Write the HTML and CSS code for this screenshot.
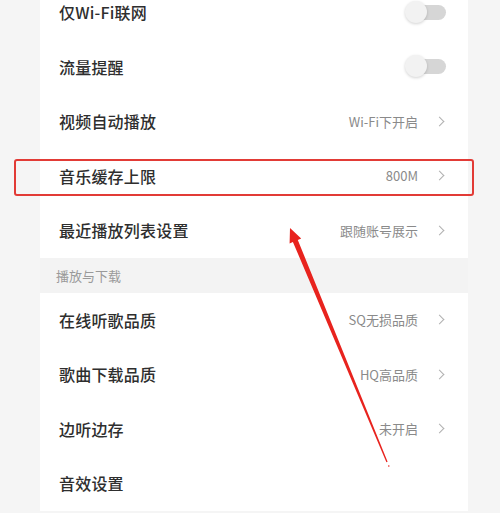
FILE: index.html
```html
<!DOCTYPE html>
<html lang="zh-CN">
<head>
<meta charset="utf-8">
<title>设置</title>
<link rel="stylesheet" href="styles.css">
</head>
<body>
<div class="page">
  <div class="card first">
    <div class="row"><span class="label">仅Wi-Fi联网</span><span class="switch"><span class="knob"></span></span></div>
    <div class="row"><span class="label">流量提醒</span><span class="switch"><span class="knob"></span></span></div>
    <div class="row"><span class="label">视频自动播放</span><span class="right"><span class="value">Wi-Fi下开启</span><span class="chev"></span></span></div>
    <div class="row"><span class="label">音乐缓存上限</span><span class="right"><span class="value">800M</span><span class="chev"></span></span></div>
    <div class="row"><span class="label">最近播放列表设置</span><span class="right"><span class="value">跟随账号展示</span><span class="chev"></span></span></div>
  </div>
  <div class="section">播放与下载</div>
  <div class="card">
    <div class="row"><span class="label">在线听歌品质</span><span class="right"><span class="value">SQ无损品质</span><span class="chev"></span></span></div>
    <div class="row"><span class="label">歌曲下载品质</span><span class="right"><span class="value">HQ高品质</span><span class="chev"></span></span></div>
    <div class="row"><span class="label">边听边存</span><span class="right"><span class="value">未开启</span><span class="chev"></span></span></div>
    <div class="row"><span class="label">音效设置</span></div>
  </div>
  <div class="highlight"></div>
  <svg class="arrow" width="500" height="513" viewBox="0 0 500 513">
    <polygon fill="#e8231e" points="290,228 301.2,238.4 297.8,239.9 387.6,461.8 386.4,462.2 292.9,241.9 289.6,243.4"/>
    <circle cx="388.8" cy="466" r="0.8" fill="#e8231e"/>
  </svg>
</div>
</body>
</html>
```

FILE: styles.css
```css
html, body {
  margin: 0;
  padding: 0;
  background: #f5f5f5;
}
body {
  font-family: "Noto Sans CJK SC", "Noto Sans", sans-serif;
  width: 500px;
  height: 513px;
  overflow: hidden;
}
.page {
  position: relative;
  width: 500px;
  height: 513px;
  overflow: hidden;
}
.card {
  margin: 0 32px 0 40px;
  background: #ffffff;
  display: flex;
  flex-direction: column;
}
.card.first {
  margin-top: -15px;
}
.row {
  height: 54.5px;
  display: flex;
  align-items: center;
  justify-content: space-between;
  padding: 0 23px 0 19px;
}
.label {
  font-size: 16px;
  font-weight: 500;
  color: #2e2e2e;
  letter-spacing: 0.2px;
}
.right {
  display: flex;
  align-items: center;
  gap: 18px;
}
.value {
  font-size: 13px;
  color: #8a8a8a;
}
.chev {
  width: 6px;
  height: 6px;
  border-top: 1.2px solid #b0b0b0;
  border-right: 1.2px solid #b0b0b0;
  transform: rotate(45deg);
  margin-right: 2px;
}
.switch {
  position: relative;
  width: 40px;
  height: 15px;
  border-radius: 8px;
  background: #d6d6d6;
  margin-right: -1px;
}
.knob {
  position: absolute;
  left: -1px;
  top: -4px;
  width: 22px;
  height: 22px;
  border-radius: 50%;
  background: #f2f2f2;
  box-shadow: 0 1px 3px rgba(0,0,0,0.18);
}
.section {
  height: 35px;
  margin: 0 32px 0 40px;
  padding-left: 16px;
  display: flex;
  align-items: center;
  font-size: 13px;
  color: #9a9a9a;
  background: #f3f3f3;
}
.highlight {
  position: absolute;
  left: 14px;
  top: 159px;
  width: 456px;
  height: 33px;
  border: 2px solid #e23b36;
  border-radius: 3px;
}
.arrow {
  position: absolute;
  left: 0;
  top: 0;
}
```
